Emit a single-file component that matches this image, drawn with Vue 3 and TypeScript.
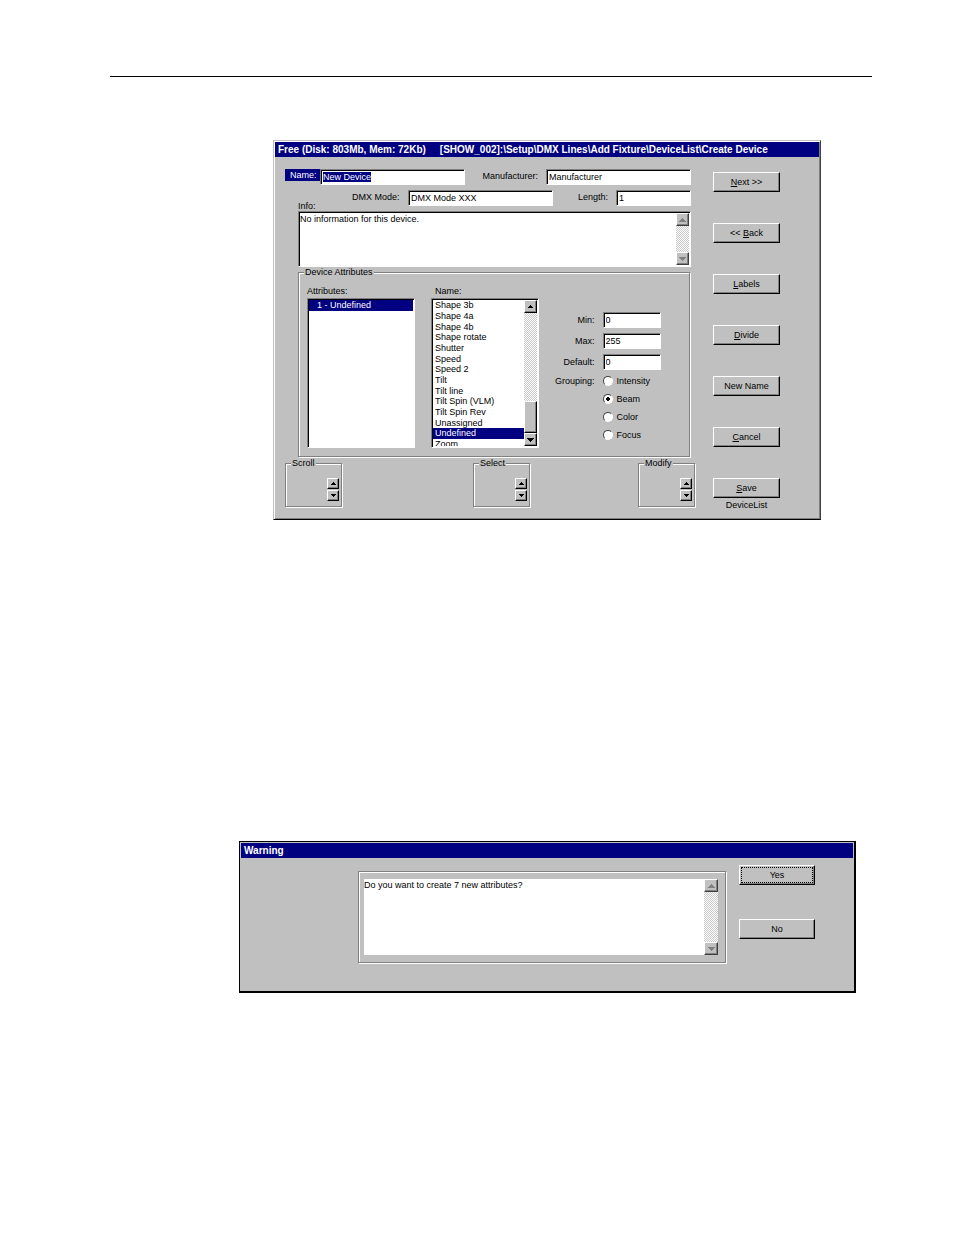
<script setup lang="ts">
import { onMounted, ref } from 'vue'

interface Action {
  key: string
  rest: string
  lead?: string
}

const actions: Action[] = [
  { key: 'N', rest: 'ext >>' },
  { lead: '<< ', key: 'B', rest: 'ack' },
  { key: 'L', rest: 'abels' },
  { key: 'D', rest: 'ivide' },
  { key: '', rest: 'New Name' },
  { key: 'C', rest: 'ancel' },
  { key: 'S', rest: 'ave' },
]

const names: string[] = [
  'Shape 3b',
  'Shape 4a',
  'Shape 4b',
  'Shape rotate',
  'Shutter',
  'Speed',
  'Speed 2',
  'Tilt',
  'Tilt line',
  'Tilt Spin (VLM)',
  'Tilt Spin Rev',
  'Unassigned',
  'Undefined',
  'Zoom',
]

const groupings: string[] = ['Intensity', 'Beam', 'Color', 'Focus']
const spinners: string[] = ['Scroll', 'Select', 'Modify']

const deviceName = ref('New Device')
const manufacturer = ref('Manufacturer')
const dmxMode = ref('DMX Mode XXX')
const channelLength = ref('1')
const info = ref('No information for this device.')
const attribute = ref('1 - Undefined')
const attributeName = ref('Undefined')
const min = ref('0')
const max = ref('255')
const defaultValue = ref('0')
const grouping = ref('Beam')
const question = ref('Do you want to create 7 new attributes?')

const nameInput = ref<HTMLInputElement | null>(null)

onMounted(() => {
  nameInput.value?.focus()
  nameInput.value?.select()
})
</script>

<template>
  <main class="page">
    <hr class="rule" />

    <section class="window device">
      <h1 class="titlebar">
        <span>Free (Disk: 803Mb, Mem: 72Kb)</span>
        <span>[SHOW_002]:\Setup\DMX Lines\Add Fixture\DeviceList\Create Device</span>
      </h1>
      <div class="device-body">
        <div class="fields">
          <div class="row first">
            <label class="name-label" for="name">Name:</label>
            <input id="name" ref="nameInput" v-model="deviceName" class="field wide" type="text" />
            <label class="push" for="manufacturer">Manufacturer:</label>
            <input id="manufacturer" v-model="manufacturer" class="field wide" type="text" />
          </div>
          <div class="row second">
            <label class="info-label" for="info">Info:</label>
            <label class="mode-label" for="mode">DMX Mode:</label>
            <input id="mode" v-model="dmxMode" class="field wide" type="text" />
            <label class="push" for="length">Length:</label>
            <input id="length" v-model="channelLength" class="field short" type="text" />
          </div>

          <div class="sunken info">
            <textarea id="info" v-model="info" class="memo"></textarea>
            <div class="scrollbar">
              <button type="button" class="arrow off" aria-label="Scroll up">
                <svg viewBox="0 0 7 4" width="7" height="4"><path d="M3 0h1v1h1v1h1v1h1v1H0V3h1V2h1V1h1z" /></svg>
              </button>
              <button type="button" class="arrow off" aria-label="Scroll down">
                <svg viewBox="0 0 7 4" width="7" height="4"><path d="M0 0h7v1H6v1H5v1H4v1H3V3H2V2H1V1H0z" /></svg>
              </button>
            </div>
          </div>

          <fieldset class="etched attributes">
            <legend>Device Attributes</legend>
            <div class="attr-grid">
              <div class="list-col">
                <label for="attrs">Attributes:</label>
                <div class="sunken list">
                  <select id="attrs" v-model="attribute" class="listbox indent" size="14">
                    <option>1 - Undefined</option>
                  </select>
                </div>
              </div>
              <div class="list-col">
                <label class="inset-label" for="names">Name:</label>
                <div class="sunken list">
                  <select id="names" v-model="attributeName" class="listbox" size="14">
                    <option v-for="n in names" :key="n">{{ n }}</option>
                  </select>
                  <div class="scrollbar">
                    <button type="button" class="arrow" aria-label="Scroll up">
                      <svg viewBox="0 0 5 3" width="5" height="3"><path d="M2 0h1v1h1v1h1v1H0V2h1V1h1z" /></svg>
                    </button>
                    <div class="thumb"></div>
                    <button type="button" class="arrow" aria-label="Scroll down">
                      <svg viewBox="0 0 7 4" width="7" height="4"><path d="M0 0h7v1H6v1H5v1H4v1H3V3H2V2H1V1H0z" /></svg>
                    </button>
                  </div>
                </div>
              </div>
              <div class="values">
                <label for="min">Min:</label>
                <input id="min" v-model="min" class="field" type="text" />
                <label for="max">Max:</label>
                <input id="max" v-model="max" class="field" type="text" />
                <label for="default">Default:</label>
                <input id="default" v-model="defaultValue" class="field" type="text" />
                <span id="grouping" class="grouping">Grouping:</span>
                <div class="radios" role="radiogroup" aria-labelledby="grouping">
                  <label v-for="g in groupings" :key="g" class="radio">
                    <input v-model="grouping" type="radio" name="grouping" :value="g" />{{ g }}
                  </label>
                </div>
              </div>
            </div>
          </fieldset>

          <div class="spinners">
            <fieldset v-for="s in spinners" :key="s" class="etched spinner">
              <legend>{{ s }}</legend>
              <div class="steps">
                <button type="button" class="step" :aria-label="s + ' up'">
                  <svg viewBox="0 0 5 3" width="5" height="3"><path d="M2 0h1v1h1v1h1v1H0V2h1V1h1z" /></svg>
                </button>
                <button type="button" class="step" :aria-label="s + ' down'">
                  <svg viewBox="0 0 5 3" width="5" height="3"><path d="M0 0h5v1H4v1H3v1H2V2H1V1H0z" /></svg>
                </button>
              </div>
            </fieldset>
          </div>
        </div>

        <div class="actions">
          <button v-for="a in actions" :key="a.rest" type="button" class="button">
            {{ a.lead }}<u>{{ a.key }}</u>{{ a.rest }}
          </button>
          <p class="caption">DeviceList</p>
        </div>
      </div>
    </section>

    <section class="window warning">
      <h2 class="titlebar">Warning</h2>
      <div class="warning-body">
        <div class="etched message">
          <textarea v-model="question" class="memo" aria-label="Message"></textarea>
          <div class="scrollbar">
            <button type="button" class="arrow off" aria-label="Scroll up">
              <svg viewBox="0 0 7 4" width="7" height="4"><path d="M3 0h1v1h1v1h1v1h1v1H0V3h1V2h1V1h1z" /></svg>
            </button>
            <button type="button" class="arrow off" aria-label="Scroll down">
              <svg viewBox="0 0 7 4" width="7" height="4"><path d="M0 0h7v1H6v1H5v1H4v1H3V3H2V2H1V1H0z" /></svg>
            </button>
          </div>
        </div>
        <div class="answers">
          <button type="button" class="button default"><span>Yes</span></button>
          <button type="button" class="button">No</button>
        </div>
      </div>
    </section>
  </main>
</template>

<style>
body {
  background: #fff;
}
</style>

<style scoped>
* {
  box-sizing: border-box;
}

.page {
  padding: 76px 82px 0 110px;
  color: #000;
  font: 9px/12px 'Liberation Sans', Arial, sans-serif;
}

button,
input,
select,
textarea {
  margin: 0;
  color: inherit;
  font: inherit;
  border-radius: 0;
  outline: none;
}

.rule {
  height: 1px;
  margin: 0;
  border: 0;
  background: #000;
}

.window {
  background: #c0c0c0;
}

.titlebar {
  display: flex;
  gap: 14px;
  margin: 0;
  padding: 0 3px;
  color: #fff;
  background: #000080;
  font: bold 10px/15px 'Liberation Sans', Arial, sans-serif;
  white-space: nowrap;
}

/* Device window */
.device {
  margin: 63px 51px 0 163px;
  border: 1px solid;
  border-color: #c0c0c0 #404040 #000 #c0c0c0;
  box-shadow: inset 1px 1px 0 #fff, inset -1px -1px 0 #808080;
  padding: 1px;
}

.device-body {
  display: flex;
  gap: 18px;
  padding: 12px 39px 7px 10px;
}

.fields {
  flex: 1;
  min-width: 0;
}

.row {
  display: flex;
  align-items: flex-start;
  padding-right: 4px;
}

.row label {
  line-height: 14px;
  white-space: nowrap;
}

.first {
  height: 21px;
}

.second {
  height: 21px;
  padding-left: 13px;
}

.name-label {
  width: 35px;
  padding-left: 5px;
  color: #fff;
  background: #000080;
}

.row .name-label {
  line-height: 12px;
}

.push {
  margin-left: auto;
  padding-right: 8px;
}

.row .info-label {
  align-self: flex-end;
  width: 54px;
  line-height: 10px;
}

.mode-label {
  width: 56px;
}

.field {
  width: 58px;
  height: 16px;
  padding: 0 2px;
  border: 1px solid;
  border-color: #808080 #fff #fff #808080;
  background: #fff;
  box-shadow: inset 1px 1px 0 #000;
  line-height: 12px;
}

.wide {
  width: 145px;
}

.short {
  width: 75px;
}

.field::selection {
  color: #fff;
  background: #000080;
}

.sunken {
  border: 1px solid;
  border-color: #808080 #fff #fff #808080;
  background: #fff;
  box-shadow: inset 1px 1px 0 #000;
  padding: 1px;
}

.info {
  display: flex;
  height: 56px;
  margin: 0 4px 0 13px;
}

.memo {
  flex: 1;
  min-width: 0;
  padding: 0;
  border: 0;
  background: transparent;
  resize: none;
  overflow: hidden;
}

.scrollbar {
  display: flex;
  flex: none;
  flex-direction: column;
  justify-content: space-between;
  width: 13px;
  background: repeating-conic-gradient(#c8c8c8 0 25%, #fff 0 50%) 0 0 / 2px 2px;
}

.arrow,
.step,
.thumb,
.button {
  display: flex;
  align-items: center;
  justify-content: center;
  padding: 0;
  border: 1px solid;
  border-color: #fff #000 #000 #fff;
  background: #c0c0c0;
  box-shadow: inset -1px -1px 0 #808080;
}

.arrow {
  width: 100%;
  height: 13px;
}

.off svg {
  fill: #808080;
}

.off {
  border-color: #fff #404040 #404040 #fff;
}

.thumb {
  height: 32px;
  margin-top: auto;
}

.etched {
  min-width: 0;
  margin: 0;
  padding: 0;
  border: 1px solid #808080;
  box-shadow: inset 1px 1px 0 #fff, 1px 1px 0 #fff;
}

legend {
  margin-left: 5px;
  padding: 0 1px;
  background: #c0c0c0;
  line-height: 10px;
}

.attributes {
  height: 190px;
  margin: 0 5px 1px 13px;
}

.attr-grid {
  display: grid;
  grid-template-columns: 108px 108px 1fr;
  column-gap: 16px;
  padding: 7px 32px 0 8px;
}

.list-col label {
  display: block;
  line-height: 14px;
}

.list-col .inset-label {
  padding-left: 4px;
}

.list {
  display: flex;
  height: 150px;
}

.listbox {
  flex: 1;
  min-width: 0;
  height: 100%;
  padding: 0;
  border: 0;
  background: transparent;
  overflow: hidden;
}

.listbox option {
  height: 11px;
  min-height: 0;
  padding: 0 2px;
  line-height: 11px;
}

.listbox option:nth-child(3n) {
  height: 10px;
  line-height: 10px;
}

.indent option {
  padding-left: 8px;
}

.listbox option:checked {
  background: #000080 linear-gradient(#000080, #000080);
  -webkit-text-fill-color: #fff;
}

.values {
  display: grid;
  grid-template-columns: 1fr 58px;
  grid-auto-rows: 16px;
  gap: 5px 8px;
  padding-top: 28px;
}

.values > label,
.grouping {
  line-height: 16px;
  text-align: right;
}

.values .grouping {
  line-height: 12px;
}

.radios {
  display: flex;
  flex-direction: column;
  gap: 6px;
}

.radio {
  display: flex;
  align-items: center;
  gap: 4px;
  white-space: nowrap;
}

.radio input {
  flex: none;
  width: 10px;
  height: 10px;
  appearance: none;
  border: 1px solid;
  border-color: #404040 #fff #fff #404040;
  border-radius: 50%;
  background: #fff;
}

.radio input:checked {
  background: radial-gradient(circle, #000 2px, #fff 2px);
}

.spinners {
  display: grid;
  grid-template-columns: 188fr 165fr 57px;
}

.spinner {
  width: 57px;
  height: 49px;
}

.steps {
  display: flex;
  flex-direction: column;
  gap: 1px;
  width: 12px;
  margin: 10px 2px 0 auto;
}

.step {
  width: 12px;
  height: 11px;
}

.actions {
  display: flex;
  flex: none;
  flex-direction: column;
  gap: 31px;
  width: 67px;
  padding-top: 3px;
}

.button {
  display: block;
  height: 20px;
  text-align: center;
  white-space: nowrap;
}

.caption {
  margin: -30px 0 0;
  text-align: center;
}

/* Warning window */
.warning {
  margin: 321px 16px 0 129px;
  border: 1px solid #000;
  border-width: 1px 2px 2px 1px;
  padding: 1px;
}

.warning-body {
  display: flex;
  align-items: flex-start;
  gap: 13px;
  padding: 7px 38px 27px 117px;
}

.message {
  display: flex;
  flex: 1;
  min-width: 0;
  height: 92px;
  margin-top: 6px;
  padding: 7px;
  padding-left: 5px;
}

.message .memo {
  background: #fff;
}

.message .scrollbar {
  width: 14px;
}

.answers {
  display: flex;
  flex-direction: column;
  gap: 34px;
  width: 76px;
}

.default {
  padding: 1px;
}

.default span {
  display: block;
  height: 16px;
  border: 1px dotted #000;
  line-height: 14px;
}
</style>
